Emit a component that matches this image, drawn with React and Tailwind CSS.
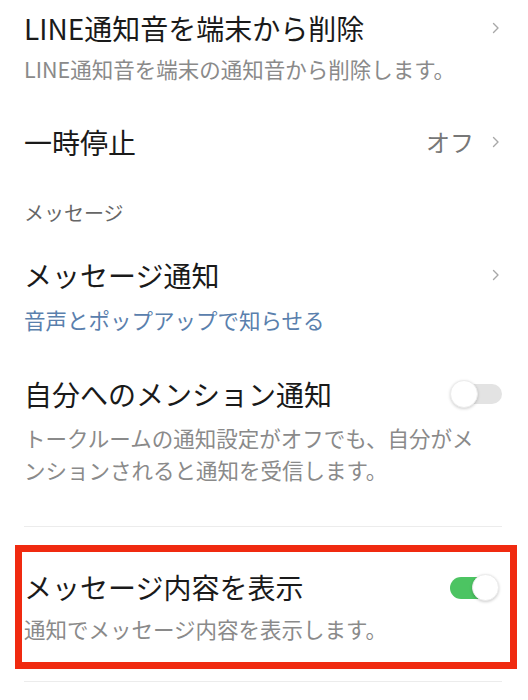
import React from 'react';

const Chevron = () => (
  <svg width="8" height="12" viewBox="0 0 8 12" fill="none" className="shrink-0">
    <path d="M1.5 1.5 L6 6 L1.5 10.5" stroke="#a8a8a8" strokeWidth="1.4" strokeLinecap="round" strokeLinejoin="round" />
  </svg>
);

function Toggle({ on }) {
  if (on) {
    return (
      <div className="relative w-[49px] h-[27px] shrink-0">
        <div className="absolute left-0 top-[3px] w-[45px] h-[22px] rounded-full bg-[#4cc462]" />
        <div className="absolute right-0 top-0 w-[27px] h-[27px] rounded-full bg-white shadow-[0_1px_3px_rgba(0,0,0,0.2)] border border-[#ececec]" />
      </div>
    );
  }
  return (
    <div className="relative w-[52px] h-[28px] shrink-0">
      <div className="absolute left-[5px] top-[4px] w-[47px] h-[20px] rounded-full bg-[#e3e3e3]" />
      <div className="absolute left-0 top-0 w-[28px] h-[28px] rounded-full bg-white shadow-[0_1px_3px_rgba(0,0,0,0.18)] border border-[#ececec]" />
    </div>
  );
}

export default function App() {
  return (
    <div className="w-[528px] h-[700px] bg-white overflow-hidden font-['Noto_Sans_CJK_JP',sans-serif]">
      {/* LINE通知音 */}
      <div className="pt-[10px] pl-6 pr-[28px]">
        <div className="flex items-center justify-between">
          <span className="text-[28px] leading-[36px] text-[#1a1a1a]">LINE通知音を端末から削除</span>
          <Chevron />
        </div>
        <p className="mt-[8px] text-[21.5px] leading-[30px] text-[#8a8a8a]">LINE通知音を端末の通知音から削除します。</p>
      </div>

      {/* 一時停止 */}
      <div className="mt-[40px] pl-6 pr-[28px] flex items-center justify-between">
        <span className="text-[28px] leading-[36px] text-[#1a1a1a]">一時停止</span>
        <div className="flex items-center gap-[18px]">
          <span className="text-[24px] leading-[36px] text-[#777]">オフ</span>
          <Chevron />
        </div>
      </div>

      {/* section */}
      <p className="mt-[38px] pl-6 text-[20px] leading-[30px] text-[#666]">メッセージ</p>

      {/* メッセージ通知 */}
      <div className="mt-[29px] pl-6 pr-[28px]">
        <div className="flex items-center justify-between">
          <span className="text-[28px] leading-[36px] text-[#1a1a1a]">メッセージ通知</span>
          <Chevron />
        </div>
        <p className="mt-[12px] text-[21.5px] leading-[30px] text-[#5a80ad]">音声とポップアップで知らせる</p>
      </div>

      {/* 自分へのメンション通知 */}
      <div className="mt-[41px] pl-6 pr-[26px]">
        <div className="flex items-center justify-between">
          <span className="text-[28px] leading-[36px] text-[#1a1a1a]">自分へのメンション通知</span>
          <Toggle on={false} />
        </div>
        <p className="mt-[10px] w-[462px] text-[21.5px] leading-[32px] text-[#8a8a8a]">
          トークルームの通知設定がオフでも、自分がメンションされると通知を受信します。
        </p>
      </div>

      <div className="mt-[40px] ml-6 mr-[26px] h-px bg-[#ececec]" />

      {/* highlighted */}
      <div className="mt-[18px] ml-[15px] w-[502px] border-[7px] border-[#f02a10] pl-[2px] pr-[11px] pt-[17px] pb-[18px]">
        <div className="flex items-center justify-between">
          <span className="text-[28px] leading-[36px] text-[#1a1a1a]">メッセージ内容を表示</span>
          <Toggle on />
        </div>
        <p className="mt-[9px] text-[21.5px] leading-[30px] text-[#8a8a8a]">通知でメッセージ内容を表示します。</p>
      </div>

      <div className="mt-[12px] ml-6 mr-[26px] h-px bg-[#ececec]" />
    </div>
  );
}
